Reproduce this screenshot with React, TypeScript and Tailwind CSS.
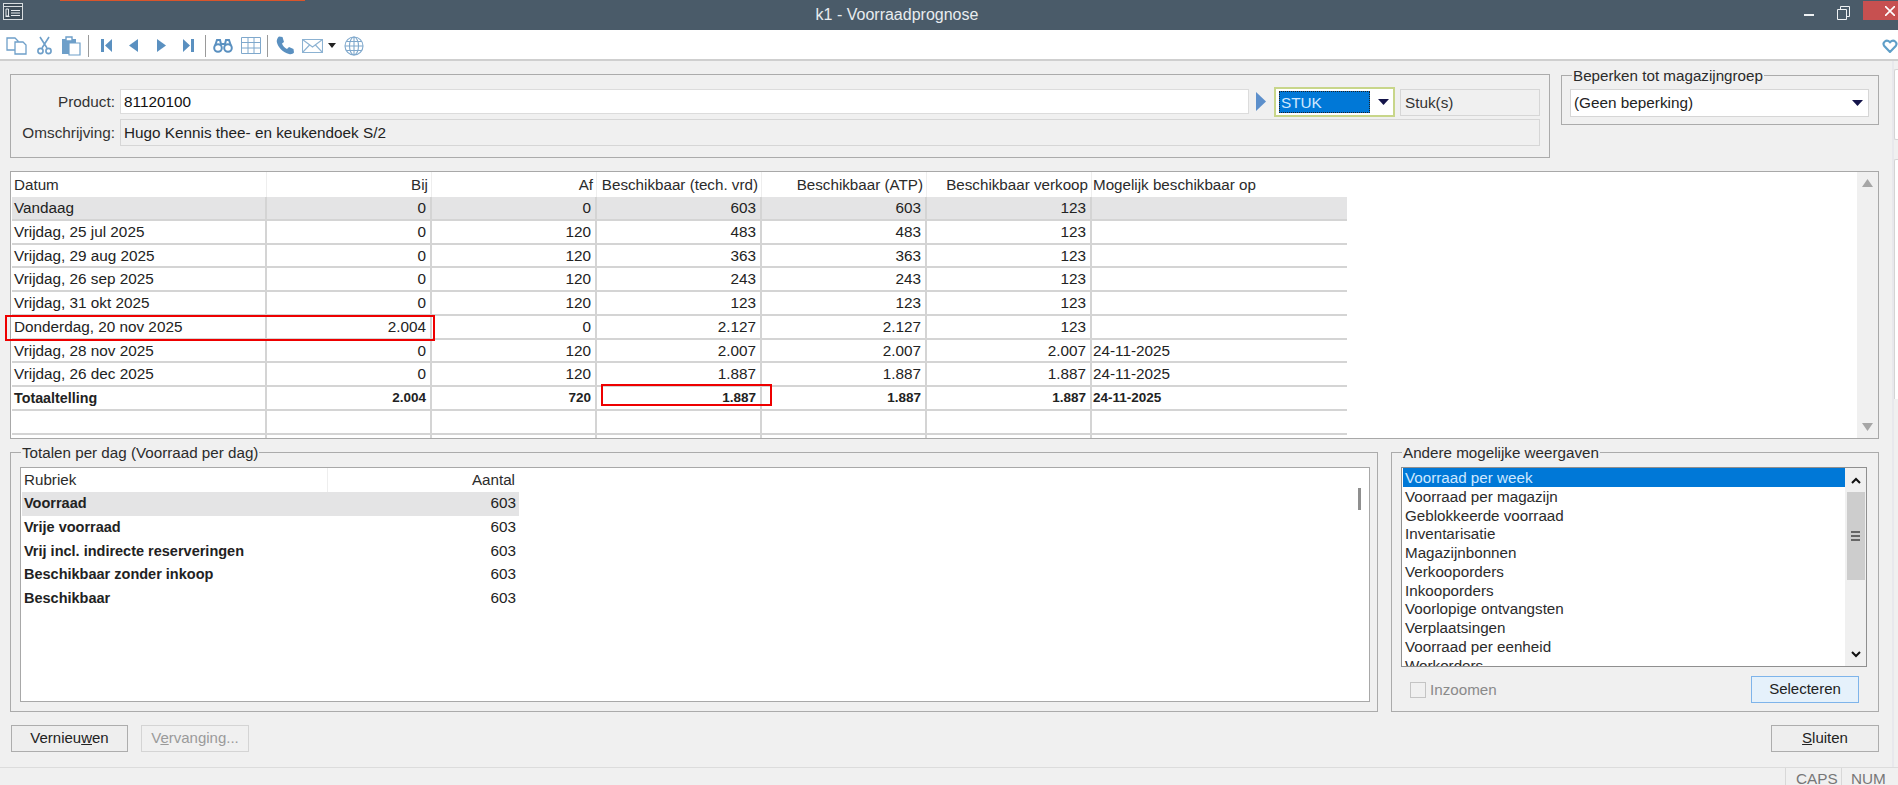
import React from 'react';

const rows = [
  ['Vandaag', '0', '0', '603', '603', '123', ''],
  ['Vrijdag, 25 jul 2025', '0', '120', '483', '483', '123', ''],
  ['Vrijdag, 29 aug 2025', '0', '120', '363', '363', '123', ''],
  ['Vrijdag, 26 sep 2025', '0', '120', '243', '243', '123', ''],
  ['Vrijdag, 31 okt 2025', '0', '120', '123', '123', '123', ''],
  ['Donderdag, 20 nov 2025', '2.004', '0', '2.127', '2.127', '123', ''],
  ['Vrijdag, 28 nov 2025', '0', '120', '2.007', '2.007', '2.007', '24-11-2025'],
  ['Vrijdag, 26 dec 2025', '0', '120', '1.887', '1.887', '1.887', '24-11-2025'],
  ['Totaaltelling', '2.004', '720', '1.887', '1.887', '1.887', '24-11-2025'],
  ['', '', '', '', '', '', ''],
  ['', '', '', '', '', '', ''],
  ['', '', '', '', '', '', ''],
];

const headers = ['Datum', 'Bij', 'Af', 'Beschikbaar (tech. vrd)', 'Beschikbaar (ATP)', 'Beschikbaar verkoop', 'Mogelijk beschikbaar op'];

const totals = ['Voorraad', 'Vrije voorraad', 'Vrij incl. indirecte reserveringen', 'Beschikbaar zonder inkoop', 'Beschikbaar'];

const views = [
  'Voorraad per week',
  'Voorraad per magazijn',
  'Geblokkeerde voorraad',
  'Inventarisatie',
  'Magazijnbonnen',
  'Verkooporders',
  'Inkooporders',
  'Voorlopige ontvangsten',
  'Verplaatsingen',
  'Voorraad per eenheid',
  'Workorders',
];

const blue = '#6e9fc9';

const Sep = ({ className }: { className: string }) => <div className={`w-px h-[22px] bg-[#9a9a9a] ${className}`} />;

const Caret = () => (
  <svg width="11" height="6" viewBox="0 0 11 6" className="shrink-0">
    <path d="M0 0h11L5.5 6z" fill="#14144a" />
  </svg>
);

const Group = ({ title, className, children }: { title: string; className: string; children: React.ReactNode }) => (
  <div className={`relative border border-[#ababab] shrink-0 ${className}`}>
    {title && (
      <span className="absolute left-[10px] -top-[9px] bg-[#f0f0f0] px-[1px] text-[15.2px] leading-[18px] text-[#2b2b2b] whitespace-nowrap">
        {title}
      </span>
    )}
    {children}
  </div>
);

const Button = ({ className, children }: { className: string; children: React.ReactNode }) => (
  <div className={`h-[27px] flex items-center justify-center border text-[15px] shrink-0 ${className}`}>{children}</div>
);

export default function App() {
  return (
    <div className="w-[1898px] h-[785px] overflow-hidden bg-[#f0f0f0] flex flex-col text-[#222] font-['Liberation_Sans',Arial,sans-serif]">
      {/* Title bar */}
      <div className="relative h-[30px] shrink-0 bg-[#4a5b69] flex items-center justify-center pr-[104px] text-[16px] text-[#e8ecef]">
        <div className="absolute left-[60px] top-0 w-[245px] h-[1px] bg-[#d9552b]" />
        <svg width="20" height="17" viewBox="0 0 20 17" className="absolute left-[3px] top-[3px]">
          <rect x="0.5" y="0.5" width="19" height="16" fill="#3d4c58" stroke="#d8dde0" />
          <path d="M1 3.5h18" stroke="#d8dde0" />
          <path d="M3 6h2.5v7H3zM2.5 13.5h4M8 7.5h9M8 10h9M8 12.5h9" stroke="#e8ecef" fill="none" />
        </svg>
        <span>k1 - Voorraadprognose</span>
        <div className="absolute left-[1804px] top-[14px] w-[10px] h-[2px] bg-[#eef1f3]" />
        <svg width="13" height="14" viewBox="0 0 13 14" className="absolute left-[1837px] top-[6px]">
          <path d="M0.5 3.5h9v10h-9zM3.5 3V0.5h9v10H10" fill="none" stroke="#eef1f3" />
        </svg>
        <div className="absolute left-[1863px] top-[1px] w-[35px] h-[19px] bg-[#c75050] flex items-center justify-center">
          <svg width="10" height="10" viewBox="0 0 10 10" className="ml-[18px]">
            <path d="M0 0l10 10M10 0L0 10" stroke="#fff" strokeWidth="1.6" />
          </svg>
        </div>
      </div>

      {/* Toolbar */}
      <div className="relative h-[31px] shrink-0 bg-white border-b-2 border-[#cfcfcf] flex items-center pt-[2px]">
        <svg width="21" height="18" viewBox="0 0 21 18" className="ml-[6px]" fill="#fff" stroke={blue} strokeWidth="1.3">
          <path d="M1 1h8l3 3v9H1z" />
          <path d="M9 5h8l3 3v9H9z" />
        </svg>
        <svg width="15" height="19" viewBox="0 0 15 19" className="ml-[10px]" fill="none" stroke={blue} strokeWidth="1.6">
          <path d="M3 1l7 11M12 1L5 12" />
          <circle cx="3.5" cy="15" r="2.6" />
          <circle cx="11.5" cy="15" r="2.6" />
        </svg>
        <svg width="19" height="20" viewBox="0 0 19 20" className="ml-[10px]">
          <path d="M0 3h14v15H0z" fill={blue} />
          <path d="M4 1h6v4H4z" fill="#fff" stroke={blue} strokeWidth="1.4" />
          <path d="M7 7h11v12H7z" fill="#fff" stroke={blue} strokeWidth="1.2" />
        </svg>
        <Sep className="ml-[7px]" />
        <svg width="11" height="13" viewBox="0 0 11 13" className="ml-[12px]" fill="#5a90c0">
          <path d="M0 0h3v13H0zM11 0v13L4 6.5z" />
        </svg>
        <svg width="9" height="13" viewBox="0 0 9 13" className="ml-[17px]" fill="#5a90c0">
          <path d="M9 0v13L0 6.5z" />
        </svg>
        <svg width="9" height="13" viewBox="0 0 9 13" className="ml-[19px]" fill="#5a90c0">
          <path d="M0 0v13L9 6.5z" />
        </svg>
        <svg width="11" height="13" viewBox="0 0 11 13" className="ml-[17px]" fill="#5a90c0">
          <path d="M8 0h3v13H8zM0 0v13L7 6.5z" />
        </svg>
        <Sep className="ml-[11px]" />
        <svg width="20" height="15" viewBox="0 0 20 15" className="ml-[7px]" fill="none" stroke="#5a90c0" strokeWidth="2">
          <circle cx="5" cy="10" r="3.8" />
          <circle cx="15" cy="10" r="3.8" />
          <path d="M2 8l2-6h3l1 4h4l1-4h3l2 6" />
        </svg>
        <svg width="20" height="17" viewBox="0 0 20 17" className="ml-[8px]" fill="none" stroke="#7fa8cc" strokeWidth="1">
          <path d="M0.5 0.5h19v16H0.5zM0.5 5.5h19M0.5 11h19M7 0.5v16M13 0.5v16" />
        </svg>
        <Sep className="ml-[6px]" />
        <svg width="19" height="19" viewBox="0 0 19 19" className="ml-[8px]">
          <path d="M3 0.5L6.5 1l1.5 5-2 1.5c.8 2.3 2.7 4.4 5 5.5l2-2 4.5 2 .5 3.5c-1 1.5-3 2-5 1.5C7 16.5 2 11.5.8 6 .5 4 1.5 1.5 3 .5z" fill="#5a90c0" />
        </svg>
        <svg width="21" height="14" viewBox="0 0 21 14" className="ml-[7px]" fill="#fff" stroke="#8cb2d2" strokeWidth="1.1">
          <path d="M0.5 0.5h20v13H0.5z" />
          <path d="M0.5 0.5l10 7.5 10-7.5M0.5 13.5l7.5-8M20.5 13.5l-7.5-8" fill="none" />
        </svg>
        <svg width="8" height="5" viewBox="0 0 8 5" className="ml-[5px]">
          <path d="M0 0h8L4 5z" fill="#222" />
        </svg>
        <svg width="20" height="20" viewBox="0 0 20 20" className="ml-[8px]" fill="none" stroke="#7fa8cc" strokeWidth="1.1">
          <circle cx="10" cy="10" r="9" />
          <ellipse cx="10" cy="10" rx="4.5" ry="9" />
          <path d="M10 1v18M1 10h18M2.5 5.5h15M2.5 14.5h15" />
        </svg>
        <svg width="16" height="14" viewBox="0 0 14 13" className="absolute left-[1882px] top-[9px]" fill="none" stroke="#5f9fc8" strokeWidth="2">
          <path d="M7 12L1.7 6.5C-.5 3.5 3.5-.5 7 3c3.5-3.5 7.5.5 5.3 3.5z" />
        </svg>
      </div>

      <div className="flex-1 flex min-h-0">
        <div className="flex-1 pl-[10px] min-w-0">
          {/* Product header */}
          <div className="flex mt-[13px]">
            <Group title="" className="w-[1540px] h-[84px] pt-[12px]">
              <div className="flex items-start h-[30px] text-[15.3px]">
                <div className="w-[104px] text-right mt-[2px] leading-[25px] text-[#333]">Product:</div>
                <div className="ml-[5px] mt-[2px] w-[1129px] h-[25px] bg-white border border-[#dcdcdc] pl-[3px] leading-[23px] text-[#111]">81120100</div>
                <svg width="10" height="19" viewBox="0 0 10 19" className="ml-[7px] mt-[5px] shrink-0">
                  <path d="M0 0l10 9.5L0 19z" fill="#5c8fcb" />
                </svg>
                <div className="ml-[8px] w-[121px] h-[30px] bg-white border-2 border-[#c8d68a] flex items-center pl-[3px] shrink-0">
                  <div className="w-[91px] h-[22px] bg-[#0078d7] border border-dotted border-[#222] text-[#cfe8ff] leading-[22px] pl-[1px]">STUK</div>
                  <div className="ml-[8px]"><Caret /></div>
                </div>
                <div className="ml-[5px] mt-[2px] w-[140px] h-[27px] border border-[#d6d6d6] pl-[4px] leading-[25px] text-[#333]">Stuk(s)</div>
              </div>
              <div className="flex items-start mt-[2px] text-[15.3px]">
                <div className="w-[104px] text-right leading-[27px] text-[#333]">Omschrijving:</div>
                <div className="ml-[5px] w-[1420px] h-[27px] border border-[#d6d6d6] pl-[3px] leading-[25px] text-[#222]">Hugo Kennis thee- en keukendoek S/2</div>
              </div>
            </Group>
            <Group title="Beperken tot magazijngroep" className="ml-[11px] mt-[1px] w-[318px] h-[50px] pt-[13px] pl-[8px]">
              <div className="w-[299px] h-[28px] bg-white border border-[#d6d6d6] flex items-center justify-between pl-[3px] pr-[5px] text-[15.3px]">
                <span>(Geen beperking)</span>
                <Caret />
              </div>
            </Group>
          </div>

          {/* Forecast table */}
          <div className="relative mt-[13px] w-[1869px] h-[268px] border border-[#a8a8a8] bg-white flex">
            <div className="flex-1 pl-px overflow-hidden">
              <div className="flex h-[25px] text-[15.2px] leading-[25px] text-[#2b2b2b]">
                {headers.map((h, i) => (
                  <div
                    key={h}
                    className={
                      i === 0
                        ? 'w-[255px] pl-[2px] border-r border-[#eeeeee]'
                        : i === 6
                          ? 'w-[255px] pl-[1px] whitespace-nowrap'
                          : 'w-[165px] text-right pr-[3px] border-r border-[#eeeeee] whitespace-nowrap'
                    }
                  >
                    {h}
                  </div>
                ))}
              </div>
              {rows.map((r, ri) => (
                <div
                  key={ri}
                  className={`flex h-[23.75px] w-[1335px] border-b-2 border-[#d4d4d4] ${ri === 0 ? 'bg-[#e4e4e5]' : ''} ${ri === 8 ? 'font-bold text-[13.5px]' : 'text-[15.3px]'}`}
                >
                  {r.map((c, i) => (
                    <div
                      key={i}
                      className={
                        i === 0
                          ? `w-[255px] pl-[2px] leading-[22px] border-r-2 border-[#d4d4d4] whitespace-nowrap ${ri === 8 ? 'text-[14.3px]' : ''}`
                          : i === 6
                            ? 'w-[255px] pl-[1px] leading-[22px] whitespace-nowrap'
                            : 'w-[165px] text-right pr-[4px] leading-[22px] border-r-2 border-[#d4d4d4]'
                      }
                    >
                      {c}
                    </div>
                  ))}
                </div>
              ))}
            </div>
            <div className="w-[21px] bg-[#f0f0f0] flex flex-col items-center justify-between py-[7px]">
              <svg width="11" height="8" viewBox="0 0 11 8"><path d="M5.5 0L11 8H0z" fill="#a6a6a6" /></svg>
              <svg width="11" height="8" viewBox="0 0 11 8"><path d="M0 0h11L5.5 8z" fill="#a6a6a6" /></svg>
            </div>
            {/* red annotations */}
            <div className="absolute -left-[6px] top-[143px] w-[430px] h-[26px] border-2 border-[#ee0000]" />
            <div className="absolute left-[590px] top-[212px] w-[171px] h-[22px] border-2 border-[#ee0000]" />
          </div>

          {/* Lower panels */}
          <div className="flex mt-[13px]">
            <Group title="Totalen per dag (Voorraad per dag)" className="w-[1368px] h-[260px] pt-[14px] pl-[9px]">
              <div className="relative w-[1350px] h-[235px] border border-[#a8a8a8] bg-white pl-px">
                <div className="flex h-[24px] w-[497px] text-[15.2px] leading-[24px] text-[#2b2b2b]">
                  <div className="w-[306px] pl-[2px] border-r border-[#eeeeee]">Rubriek</div>
                  <div className="flex-1 text-right pr-[4px]">Aantal</div>
                </div>
                {totals.map((t, i) => (
                  <div key={t} className={`flex h-[23.75px] w-[497px] leading-[22px] ${i === 0 ? 'bg-[#e4e4e5]' : ''}`}>
                    <div className="w-[306px] pl-[2px] font-bold text-[14.5px]">{t}</div>
                    <div className="flex-1 text-right pr-[3px] text-[15.3px]">603</div>
                  </div>
                ))}
                <div className="absolute left-[1337px] top-[20px] w-[3px] h-[22px] bg-[#8f8f8f]" />
              </div>
            </Group>
            <Group title="Andere mogelijke weergaven" className="ml-[13px] w-[488px] h-[260px] pt-[14px]">
              <div className="ml-[9px] w-[466px] h-[200px] border border-[#8f8f8f] bg-white flex overflow-hidden">
                <div className="flex-1 pl-px overflow-hidden text-[15.2px]">
                  {views.map((v, i) => (
                    <div key={v} className={`pl-[2px] h-[18.75px] leading-[20px] ${i === 0 ? 'bg-[#0078d7] text-[#cfe8ff]' : 'text-[#2b2b2b]'}`}>
                      {v}
                    </div>
                  ))}
                </div>
                <div className="w-[21px] shrink-0 bg-[#f0f0f0] flex flex-col items-center">
                  <div className="h-[24px] flex items-center">
                    <svg width="10" height="7" viewBox="0 0 10 7" fill="none" stroke="#111" strokeWidth="2"><path d="M1 6l4-4 4 4" /></svg>
                  </div>
                  <div className="w-[18px] h-[88px] bg-[#cdcdcd] flex flex-col items-center justify-center gap-[2px]">
                    <div className="w-[9px] h-[2px] bg-[#666]" />
                    <div className="w-[9px] h-[2px] bg-[#666]" />
                    <div className="w-[9px] h-[2px] bg-[#666]" />
                  </div>
                  <div className="flex-1" />
                  <div className="h-[24px] flex items-center">
                    <svg width="10" height="7" viewBox="0 0 10 7" fill="none" stroke="#111" strokeWidth="2"><path d="M1 1l4 4 4-4" /></svg>
                  </div>
                </div>
              </div>
              <div className="flex items-center mt-[9px] pl-[18px] pr-[19px] h-[27px]">
                <div className="w-[16px] h-[16px] border border-[#c4c4c4]" />
                <span className="ml-[4px] mt-[2px] text-[15.2px] text-[#8a8a8a]">Inzoomen</span>
                <Button className="ml-auto w-[108px] bg-[#e5f1fb] border-[#7eb4ea]">Selecteren</Button>
              </div>
            </Group>
          </div>

          {/* Buttons */}
          <div className="flex mt-[13px]">
            <Button className="ml-[1px] w-[117px] border-[#adadad] bg-[#eeeeee]">
              <span>Vernieu<span className="underline">w</span>en</span>
            </Button>
            <Button className="ml-[13px] w-[108px] border-[#d4d4d4] text-[#9a9a9a]">
              <span>V<span className="underline">e</span>rvanging...</span>
            </Button>
            <Button className="ml-[1522px] w-[108px] border-[#adadad] bg-[#eeeeee]">
              <span><span className="underline">S</span>luiten</span>
            </Button>
          </div>
        </div>

        {/* Right edge panels */}
        <div className="w-[6px] shrink-0 flex">
          <div className="w-[2px] bg-[#e8e8ec]" />
          <div className="flex-1 pt-[8px]">
            <div className="h-[71px] bg-white border-l border-y border-[#d4d4d4] rounded-l-[2px]" />
            <div className="mt-[19px] h-[240px] bg-white border-l border-t border-[#d4d4d4] rounded-tl-[2px]" />
          </div>
        </div>
      </div>

      {/* Status bar */}
      <div className="h-[18px] shrink-0 border-t border-[#dcdcdc] flex justify-end text-[15.3px] leading-[21px] text-[#777] overflow-hidden">
        <div className="w-[56px] pl-[10px] border-l border-[#d8d8d8]">CAPS</div>
        <div className="w-[57px] pl-[9px] border-l border-[#d8d8d8]">NUM</div>
      </div>
    </div>
  );
}
